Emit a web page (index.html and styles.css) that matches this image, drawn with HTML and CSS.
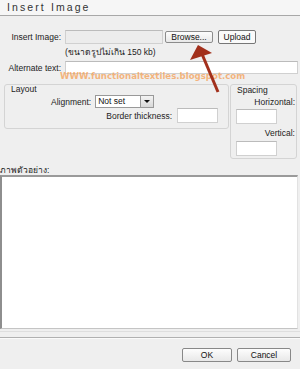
FILE: index.html
```html
<!DOCTYPE html>
<html lang="th">
<head>
    <meta charset="UTF-8">
    <title>Insert Image</title>
    <link rel="stylesheet" href="styles.css">
</head>
<body>
    <div class="dialog">
        <div class="title">Insert Image</div>

        <div class="row upload-row">
            <span class="lbl lbl-insert">Insert Image:</span>
            <span class="field file"></span>
            <span class="btn browse">Browse...</span>
            <span class="btn upload">Upload</span>
        </div>
        <div class="note">(ขนาดรูปไม่เกิน 150 kb)</div>

        <div class="row alt-row">
            <span class="lbl lbl-alt">Alternate text:</span>
            <span class="field alt"></span>
        </div>

        <div class="groups">
            <div class="group layout">
                <div class="legend">Layout</div>
                <div class="align-row">
                    <span class="lbl">Alignment:</span>
                    <span class="select">Not set<span class="caret"></span></span>
                </div>
                <div class="border-row">
                    <span class="lbl">Border thickness:</span>
                    <span class="field small"></span>
                </div>
            </div>
            <div class="group spacing">
                <div class="legend">Spacing</div>
                <div class="sp-lbl">Horizontal:</div>
                <span class="field small"></span>
                <div class="sp-lbl vert">Vertical:</div>
                <span class="field small"></span>
            </div>
        </div>

        <div class="preview-label">ภาพตัวอย่าง:</div>
        <div class="preview"></div>

        <div class="footer">
            <span class="btn ok">OK</span>
            <span class="btn cancel">Cancel</span>
        </div>

        <!-- overlays from the screenshot -->
        <div class="watermark">WWW.functionaltextiles.blogspot.com</div>
        <svg class="arrow" width="300" height="369" viewBox="0 0 300 369">
            <line x1="218" y1="92" x2="202" y2="54" stroke="#a2301c" stroke-width="3"/>
            <polygon points="198,45 190,60 212,53" fill="#a2301c"/>
        </svg>
    </div>
</body>
</html>
```

FILE: styles.css
```css
body {
    margin: 0;
    background: #efefef;
    font-family: "Liberation Sans", Arial, "Noto Sans", sans-serif;
    font-size: 8.5px;
    color: #222;
}
.dialog {
    position: relative;
    width: 300px;
    height: 369px;
    overflow: hidden;
    background: #efefef;
}
.title {
    height: 15px;
    line-height: 15px;
    padding-left: 7px;
    font-size: 10.5px;
    letter-spacing: 2.1px;
    color: #333;
    background: #f6f6f6;
    border-bottom: 1px solid #a8a8a8;
}
.row {
    display: flex;
    align-items: center;
}
.lbl {
    white-space: nowrap;
}
.field {
    display: block;
    box-sizing: border-box;
    background: #fff;
    border: 1px solid #d0d0d0;
    border-top-color: #bbb;
}
.btn {
    display: flex;
    align-items: center;
    justify-content: center;
    box-sizing: border-box;
    background: linear-gradient(#fdfdfd, #e8e8e8);
    border: 1px solid #8c8c8c;
    border-radius: 2px;
    color: #111;
}
.upload-row {
    margin-top: 13px;
    height: 15px;
}
.lbl-insert {
    width: 61px;
    text-align: right;
}
.file {
    width: 98px;
    height: 14px;
    margin-left: 4px;
    background: #ececec;
}
.browse {
    width: 48px;
    height: 12px;
    margin-left: 2px;
}
.upload {
    width: 38px;
    height: 14px;
    margin-left: 5px;
    border-color: #777;
    background: #fafafa;
}
.note {
    margin: 1px 0 0 65px;
    height: 14px;
    line-height: 14px;
    white-space: nowrap;
}
.alt-row {
    height: 13px;
    margin-top: 2px;
}
.lbl-alt {
    width: 61px;
    text-align: right;
}
.alt {
    width: 233px;
    height: 13px;
    margin-left: 4px;
}
.groups {
    display: flex;
    align-items: flex-start;
    margin-top: 10px;
    padding-left: 4px;
}
.group {
    box-sizing: border-box;
    border: 1px solid #d4d4d4;
    border-radius: 3px;
}
.layout {
    width: 225px;
    height: 45px;
}
.spacing {
    width: 67px;
    height: 75px;
    margin-left: 1px;
    padding: 0 0 0 5px;
}
.legend {
    padding-left: 6px;
    height: 9px;
    line-height: 9px;
}
.spacing .legend {
    padding-left: 1px;
    margin-top: 1px;
}
.align-row {
    display: flex;
    align-items: center;
    padding-left: 46px;
    margin-top: 1px;
}
.select {
    position: relative;
    display: block;
    box-sizing: border-box;
    width: 59px;
    height: 13px;
    line-height: 11px;
    margin-left: 4px;
    padding-left: 2px;
    background: #fff;
    border: 1px solid #999;
    color: #111;
}
.caret {
    position: absolute;
    right: 0;
    top: 0;
    width: 12px;
    height: 11px;
    border-left: 1px solid #999;
    background: linear-gradient(#f4f4f4, #d8d8d8);
}
.caret::after {
    content: "";
    position: absolute;
    left: 3px;
    top: 4px;
    border-left: 3px solid transparent;
    border-right: 3px solid transparent;
    border-top: 3px solid #111;
}
.border-row {
    display: flex;
    align-items: center;
    justify-content: flex-end;
    padding-right: 10px;
}
.small {
    width: 41px;
    height: 15px;
    margin-left: 4px;
}
.border-row .small {
    margin-left: 5px;
}
.spacing .small {
    margin-left: 0;
}
.sp-lbl {
    text-align: right;
    padding-right: 1px;
    height: 11px;
    line-height: 11px;
    margin-top: 2px;
    margin-bottom: 1px;
}
.sp-lbl.vert {
    margin-top: 4px;
    margin-bottom: 2px;
}
.preview-label {
    margin-top: 6px;
    height: 10px;
    line-height: 10px;
    white-space: nowrap;
}
.preview {
    box-sizing: border-box;
    width: 298px;
    height: 154px;
    background: #fff;
    border-top: 2px solid #9a9a9a;
    border-left: 2px solid #8e8e8e;
    border-right: 1px solid #e2e2e2;
    border-bottom: 1px solid #c4c4c4;
}
.footer {
    display: flex;
    justify-content: flex-end;
    border-top: 1px solid #dedede;
    margin-top: 2px;
    padding-top: 6px;
    padding-right: 9px;
    position: relative;
}
.footer::before {
    content: "";
    position: absolute;
    left: 0;
    right: 0;
    top: 5px;
    border-top: 1px solid #b0b0b0;
    border-bottom: 1px solid #fafafa;
}
.footer .btn {
    height: 14px;
    margin-top: 10px;
    border-color: #888;
}
.ok {
    width: 50px;
}
.cancel {
    width: 54px;
    margin-left: 5px;
}
.watermark {
    position: absolute;
    left: 60px;
    top: 71px;
    font-family: "DejaVu Sans", sans-serif;
    font-weight: bold;
    font-size: 8.6px;
    color: rgba(245, 160, 85, 0.75);
    white-space: nowrap;
}
.arrow {
    position: absolute;
    left: 0;
    top: 0;
    pointer-events: none;
}
```
